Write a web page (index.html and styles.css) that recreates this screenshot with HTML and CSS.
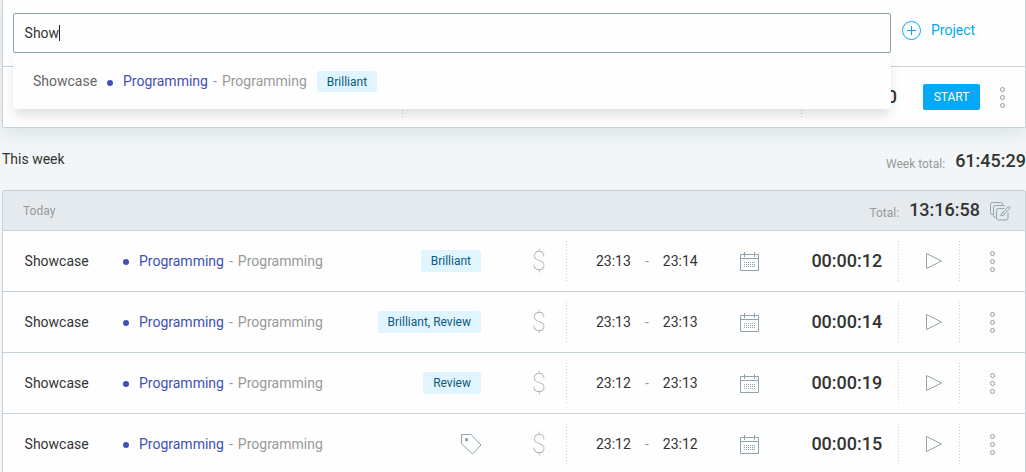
FILE: index.html
```
<!DOCTYPE html>
<html lang="en">
<head>
<meta charset="utf-8">
<title>Time tracker</title>
<link rel="stylesheet" href="styles.css">
</head>
<body>
<svg class="defs" aria-hidden="true">
  <symbol id="calendar" viewBox="0 0 19 20">
    <path d="M.5 2.500h18v16H.5zM.5 6.500h18M4.500 0v5M14.500 0v5" fill="none" stroke="#90a4ae"/>
    <path d="M4 10.500h12M4 12.500h12M4 14.500h12" fill="none" stroke="#90a4ae" stroke-dasharray="1 1"/>
  </symbol>
  <symbol id="play" viewBox="0 0 17 17">
    <path d="M.5.500v15l15-7.500z" fill="none" stroke="#90a4ae"/>
  </symbol>
  <symbol id="dots" viewBox="0 0 5 22">
    <g fill="none" stroke="#999"><circle cx="2.500" cy="3.500" r="2"/><circle cx="2.500" cy="11.500" r="2"/><circle cx="2.500" cy="19.500" r="2"/></g>
  </symbol>
  <symbol id="tag" viewBox="0 0 21 21">
    <path d="M.5.500h9.500l10 10.500-8.400 8.900L.5 9.800z" fill="none" stroke="#90a4ae"/>
    <circle cx="5.600" cy="5.800" r="1.700" fill="#90a4ae"/>
  </symbol>
</svg>

<section class="tracker">
  <div class="tracker-top">
    <div class="search">
      <div class="search-input">Show<span class="caret"></span></div>
      <div class="suggestions">
        <span class="suggestion-name">Showcase</span>
        <span class="dot"></span>
        <span class="project">Programming</span><span class="task">- Programming</span>
        <span class="label">Brilliant</span>
      </div>
    </div>
    <a class="add-project">
      <svg width="20" height="20" viewBox="0 0 20 20"><circle cx="9.500" cy="10.500" r="9" fill="none" stroke="#03a9f4"/><path d="M5 10.500h9M9.500 6v9" stroke="#03a9f4"/></svg>
      <span>Project</span>
    </a>
  </div>
  <div class="tracker-bottom">
    <div class="divider first"></div>
    <div class="divider second"></div>
    <span class="timer">00:00:00</span>
    <button class="start">START</button>
    <svg class="more" width="5" height="22"><use href="#dots"/></svg>
  </div>
</section>

<header class="week">
  <span>This week</span>
  <span class="week-total"><span class="caption">Week total:</span><b>61:45:29</b></span>
</header>

<section class="day">
  <header class="day-head">
    <span class="today">Today</span>
    <span class="caption">Total:</span><b>13:16:58</b>
    <svg class="bulk" width="21" height="19" viewBox="0 0 21 19" fill="none" stroke="#90a4ae">
      <path d="M3.500 12.500H2.500a2 2 0 0 1-2-2v-8a2 2 0 0 1 2-2h8a2 2 0 0 1 2 2v1"/>
      <path d="M6.500 15.500h-1a2 2 0 0 1-2-2v-8a2 2 0 0 1 2-2h8a2 2 0 0 1 1.500.700"/>
      <path d="M14.500 6.500h-6a2 2 0 0 0-2 2v7.500a2 2 0 0 0 2 2h7.500a2 2 0 0 0 2-2v-5.500"/>
      <path d="M13 10.500l5-5.500c1-1 2.500.300 1.600 1.400l-5 5.500zM13 10.500c-1.800-.2-1.200 1.800-2.500 2.800 2 .7 4 .3 4.100-1.400"/>
    </svg>
  </header>

  <div class="entry">
    <span>Showcase</span>
    <span class="where"><i class="dot"></i><span class="project">Programming</span><span class="task">- Programming</span></span>
    <span class="tags"><span class="label">Brilliant</span></span>
    <span class="billable">$</span>
    <span class="range"><span>23:13</span><span class="dash">-</span><span>23:14</span></span>
    <svg class="cal" width="19" height="20"><use href="#calendar"/></svg>
    <b class="duration">00:00:12</b>
    <span class="resume"><svg width="17" height="17"><use href="#play"/></svg></span>
    <svg class="more" width="5" height="22"><use href="#dots"/></svg>
  </div>
  <div class="entry">
    <span>Showcase</span>
    <span class="where"><i class="dot"></i><span class="project">Programming</span><span class="task">- Programming</span></span>
    <span class="tags"><span class="label">Brilliant, Review</span></span>
    <span class="billable">$</span>
    <span class="range"><span>23:13</span><span class="dash">-</span><span>23:13</span></span>
    <svg class="cal" width="19" height="20"><use href="#calendar"/></svg>
    <b class="duration">00:00:14</b>
    <span class="resume"><svg width="17" height="17"><use href="#play"/></svg></span>
    <svg class="more" width="5" height="22"><use href="#dots"/></svg>
  </div>
  <div class="entry">
    <span>Showcase</span>
    <span class="where"><i class="dot"></i><span class="project">Programming</span><span class="task">- Programming</span></span>
    <span class="tags"><span class="label">Review</span></span>
    <span class="billable">$</span>
    <span class="range"><span>23:12</span><span class="dash">-</span><span>23:13</span></span>
    <svg class="cal" width="19" height="20"><use href="#calendar"/></svg>
    <b class="duration">00:00:19</b>
    <span class="resume"><svg width="17" height="17"><use href="#play"/></svg></span>
    <svg class="more" width="5" height="22"><use href="#dots"/></svg>
  </div>
  <div class="entry">
    <span>Showcase</span>
    <span class="where"><i class="dot"></i><span class="project">Programming</span><span class="task">- Programming</span></span>
    <span class="tags"><svg width="21" height="21"><use href="#tag"/></svg></span>
    <span class="billable">$</span>
    <span class="range"><span>23:12</span><span class="dash">-</span><span>23:12</span></span>
    <svg class="cal" width="19" height="20"><use href="#calendar"/></svg>
    <b class="duration">00:00:15</b>
    <span class="resume"><svg width="17" height="17"><use href="#play"/></svg></span>
    <svg class="more" width="5" height="22"><use href="#dots"/></svg>
  </div>
</section>
</body>
</html>
```
FILE: styles.css
```
* { box-sizing: border-box; }
body {
  margin: 0;
  padding-left: 2px;
  height: 472px;
  overflow: hidden;
  background: #f2f6f8;
  color: #333;
  font: 14px/20px Roboto, sans-serif;
}
svg { display: block; flex: none; }
b { font-weight: 500; font-size: 18px; }
.defs { position: absolute; width: 0; height: 0; }

.tracker {
  height: 128px;
  background: #fefefe;
  border: 1px solid #c6d2d9;
  border-top: 0;
  border-radius: 0 0 2px 2px;
  box-shadow: 0 4px 18px rgba(96, 125, 139, 0.18);
}
.tracker-top {
  display: flex;
  height: 67px;
  padding: 13px 0 0 10px;
  border-bottom: 1px solid #c6d2d9;
}
.search { position: relative; z-index: 1; width: 878px; height: 40px; }
.search-input {
  display: flex;
  align-items: center;
  height: 40px;
  padding-left: 10.6px;
  background: #fefefe;
  border: 1px solid #90a4ae;
  border-radius: 2px;
}
.caret { width: 1px; height: 16px; background: #222; }
.suggestions {
  display: flex;
  align-items: center;
  height: 56px;
  padding-left: 20px;
  background: #fefefe;
  border-radius: 0 0 2px 2px;
  box-shadow: 0 8px 12px -2px rgba(0, 0, 0, 0.13);
}
.suggestion-name { width: 74px; color: #666; }
.dot {
  flex: none;
  width: 6px;
  height: 6px;
  margin: 2px 10px 0 0;
  border-radius: 50%;
  background: #3f51b5;
}
.suggestions .dot { margin-top: 4px; }
.project { color: #3f51b5; margin-right: 5px; }
.task { color: #999; word-spacing: 1.6px; }
.label {
  height: 22px;
  padding: 0 10px;
  border-radius: 2px;
  background: #e1f5fe;
  color: #0b5a80;
  font-size: 12px;
  line-height: 22px;
}
.suggestions .label { height: 21px; margin-left: 10px; }
.add-project {
  display: flex;
  gap: 9px;
  height: 20px;
  margin: 7px 0 0 11px;
  color: #03a9f4;
}
.tracker-bottom { display: flex; align-items: center; height: 60px; }
.divider {
  width: 1px;
  height: 40px;
  background: repeating-linear-gradient(#c6d2d9 0 1px, transparent 1px 3px);
}
.first { margin-left: 399px; }
.second { margin-left: 398px; }
.timer { width: 95px; text-align: right; font-size: 18px; font-weight: 500; }
.start {
  width: 57px;
  height: 26px;
  margin: 0 20px 0 26px;
  padding: 0;
  border: 0;
  border-radius: 2px;
  background: #03a9f4;
  color: #fff;
  font: 12px Roboto, sans-serif;
}

.week {
  display: flex;
  justify-content: space-between;
  height: 62px;
  padding-top: 21px;
}
.week-total, .day-head { display: flex; }
.week-total { padding-top: 2px; }
.caption { margin: 3px 10px 0 0; color: #999; font-size: 12px; }

.day { border: 1px solid #c6d2d9; border-radius: 2px 2px 0 0; }
.day-head {
  height: 40px;
  padding: 9px 14px 0 20px;
  background: #e4eaee;
  border-bottom: 1px solid #c6d2d9;
}
.today { flex: 1; padding-top: 1px; color: #999; font-size: 12px; }
.bulk { margin: 2px 0 0 10px; }

.entry {
  display: grid;
  grid-template-columns: 98.4px 210px 148px 85px 174px 71.4px 86.6px 62px 1fr;
  align-items: center;
  height: 61px;
  padding-left: 21.6px;
  background: #fefefe;
  border-bottom: 1px solid #c6d2d9;
}
.where { display: flex; align-items: center; }
.tags { display: flex; justify-content: flex-end; }
.tags svg { margin-right: -1px; }
.billable {
  padding: 2px 0 0 51px;
  color: #a4a4a4;
  font-size: 25px;
  font-weight: 100;
}
.range {
  display: flex;
  height: 40px;
  align-items: center;
  padding-left: 30px;
  background: repeating-linear-gradient(#c6d2d9 0 1px, transparent 1px 3px) 0 0 / 1px 40px no-repeat;
}
.dash { width: 32px; text-align: center; color: #999; }
.cal { margin-top: 2px; }
.resume {
  display: flex;
  align-items: center;
  height: 40px;
  padding-left: 28px;
  background:
    repeating-linear-gradient(#c6d2d9 0 1px, transparent 1px 3px) 0 0 / 1px 40px no-repeat,
    repeating-linear-gradient(#c6d2d9 0 1px, transparent 1px 3px) 100% 0 / 1px 40px no-repeat;
}
.resume svg { margin-top: 1px; }
.entry .more { margin-left: 30px; }
```
